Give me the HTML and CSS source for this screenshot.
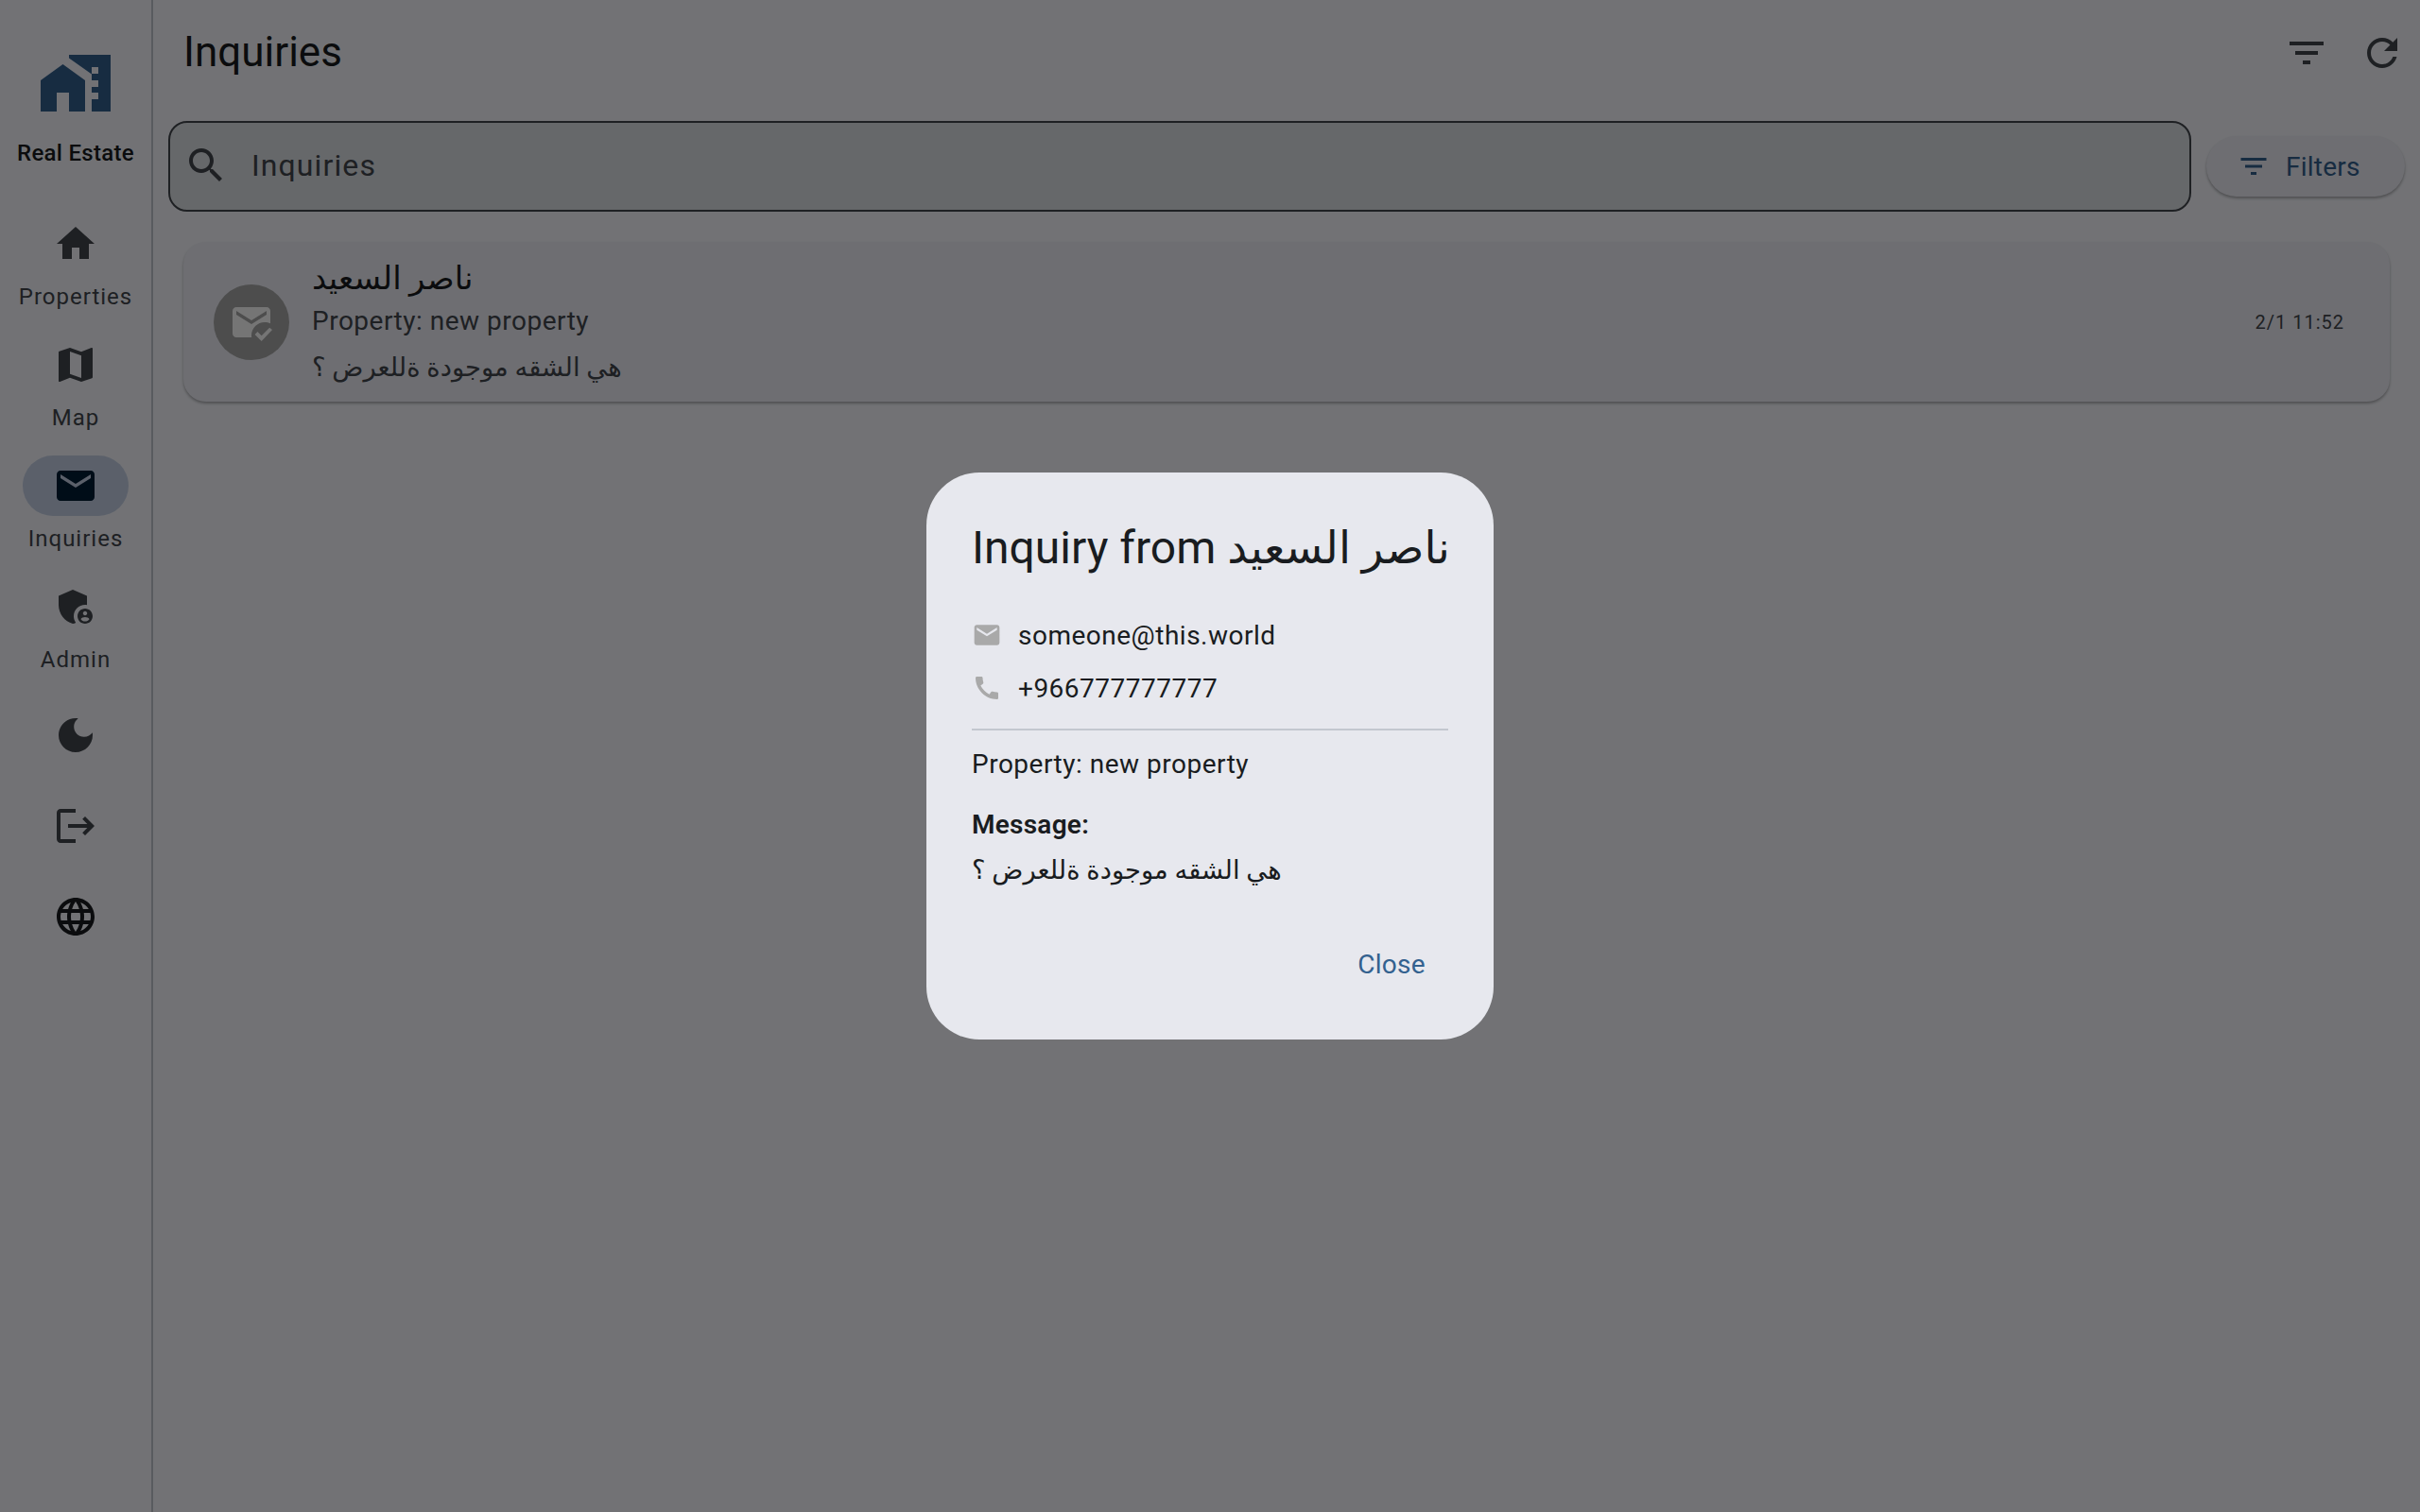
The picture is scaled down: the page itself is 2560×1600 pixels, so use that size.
FILE: index.html
```html
<!DOCTYPE html>
<html lang="en">
<head>
<meta charset="utf-8">
<title>Inquiries</title>
<link rel="stylesheet" href="styles.css">
</head>
<body>
<div class="app">
  <nav class="rail">
    <div class="brand">
      <svg class="logo" viewBox="0 0 74 60"><path class="logo-fill" d="M30 0H74V60H54V47H61V40H54V34H61V27H54V20.5L30 3.5ZM54 13V20H61V13Z" fill-rule="evenodd"/><path class="logo-fill" d="M0 27L23.500 10L47 27V60H30V40H17V60H0Z"/></svg>
      <div class="brand-name">Real Estate</div>
    </div>
    <div class="nav-item">
      <div class="nav-pill"><svg class="icon" viewBox="0 0 24 24"><path d="M10 20v-6h4v6h5v-8h3L12 3 2 12h3v8z"/></svg></div>
      <div class="nav-label">Properties</div>
    </div>
    <div class="nav-item">
      <div class="nav-pill"><svg class="icon" viewBox="0 0 24 24"><path d="M20.5 3l-.16.03L15 5.1 9 3 3.36 4.9c-.21.07-.36.25-.36.48V20.500c0 .28.22.5.5.5l.16-.03L9 18.900l6 2.100 5.640-1.900c.21-.07.36-.25.36-.48V3.500c0-.28-.22-.5-.5-.5zM15 19l-6-2.110V5l6 2.110V19z"/></svg></div>
      <div class="nav-label">Map</div>
    </div>
    <div class="nav-item">
      <div class="nav-pill nav-pill-active"><svg class="icon icon-active" viewBox="0 0 24 24"><path d="M20 4H4c-1.100 0-1.990.9-1.990 2L2 18c0 1.100.9 2 2 2h16c1.100 0 2-.9 2-2V6c0-1.100-.9-2-2-2zm0 4l-8 5-8-5V6l8 5 8-5v2z"/></svg></div>
      <div class="nav-label">Inquiries</div>
    </div>
    <div class="nav-item">
      <div class="nav-pill"><svg class="icon" viewBox="0 0 24 24"><path d="M17 11c.34 0 .67.04 1 .09V6.270L10.500 3 3 6.270v4.910c0 4.540 3.200 8.790 7.500 9.820.55-.13 1.080-.32 1.600-.55-.69-.98-1.100-2.170-1.100-3.450 0-3.310 2.690-6 6-6z"/><path d="M17 13c-2.210 0-4 1.790-4 4s1.790 4 4 4 4-1.790 4-4-1.790-4-4-4zm0 1.380c.62 0 1.120.51 1.120 1.120s-.51 1.120-1.120 1.120-1.120-.51-1.120-1.120.5-1.120 1.120-1.120zm0 5.370c-.93 0-1.740-.46-2.240-1.170.05-.72 1.510-1.080 2.240-1.080s2.190.36 2.240 1.080c-.5.71-1.310 1.170-2.240 1.170z"/></svg></div>
      <div class="nav-label">Admin</div>
    </div>
    <div class="rail-actions">
      <svg class="icon" viewBox="0 0 24 24"><path d="M12 3c-4.970 0-9 4.030-9 9s4.030 9 9 9 9-4.030 9-9c0-.46-.04-.92-.1-1.360-.98 1.370-2.580 2.260-4.400 2.260-2.980 0-5.400-2.420-5.400-5.400 0-1.810.89-3.420 2.260-4.400-.44-.06-.9-.1-1.360-.1z"/></svg>
      <svg class="icon" viewBox="0 0 24 24"><path d="M17 7l-1.410 1.410L18.170 11H8v2h10.170l-2.580 2.580L17 17l5-5zM4 5h8V3H4c-1.100 0-2 .9-2 2v14c0 1.100.9 2 2 2h8v-2H4V5z"/></svg>
      <svg class="icon icon-dark" viewBox="0 0 24 24"><path d="M11.990 2C6.470 2 2 6.480 2 12s4.470 10 9.990 10C17.520 22 22 17.520 22 12S17.520 2 11.990 2zm6.930 6h-2.950c-.32-1.250-.78-2.450-1.380-3.560 1.840.63 3.370 1.910 4.330 3.560zM12 4.040c.83 1.200 1.480 2.530 1.910 3.960h-3.820c.43-1.430 1.080-2.760 1.910-3.960zM4.260 14C4.100 13.360 4 12.690 4 12s.1-1.360.26-2h3.380c-.08.66-.14 1.320-.14 2 0 .68.06 1.340.14 2H4.260zm.82 2h2.950c.32 1.250.78 2.450 1.380 3.560-1.840-.63-3.370-1.900-4.330-3.560zm2.950-8H5.080c.96-1.660 2.490-2.930 4.330-3.560C8.810 5.550 8.350 6.750 8.030 8zM12 19.960c-.83-1.200-1.480-2.530-1.910-3.960h3.820c-.43 1.430-1.080 2.760-1.910 3.960zM14.340 14H9.660c-.09-.66-.16-1.320-.16-2 0-.68.07-1.350.16-2h4.680c.09.65.16 1.320.16 2 0 .68-.07 1.340-.16 2zm.25 5.560c.6-1.110 1.060-2.310 1.380-3.560h2.950c-.96 1.650-2.490 2.930-4.330 3.560zM16.360 14c.08-.66.14-1.320.14-2 0-.68-.06-1.340-.14-2h3.380c.16.64.26 1.310.26 2s-.1 1.360-.26 2h-3.380z"/></svg>
    </div>
  </nav>
  <main class="main">
    <header class="topbar">
      <h1 class="page-title">Inquiries</h1>
      <div class="top-actions">
        <svg class="icon" viewBox="0 0 24 24"><path d="M10 18h4v-2h-4v2zM3 6v2h18V6H3zm3 7h12v-2H6v2z"/></svg>
        <svg class="icon" viewBox="0 0 24 24"><path d="M17.650 6.350C16.200 4.900 14.210 4 12 4c-4.420 0-7.990 3.580-7.990 8s3.570 8 7.990 8c3.730 0 6.840-2.550 7.730-6h-2.080c-.82 2.330-3.040 4-5.650 4-3.310 0-6-2.690-6-6s2.690-6 6-6c1.660 0 3.140.69 4.220 1.780L13 11h7V4l-2.350 2.350z"/></svg>
      </div>
    </header>
    <div class="search-row">
      <div class="search">
        <svg class="icon" viewBox="0 0 24 24"><path d="M15.500 14h-.79l-.28-.27C15.410 12.590 16 11.110 16 9.500 16 5.910 13.090 3 9.500 3S3 5.910 3 9.500 5.910 16 9.500 16c1.610 0 3.090-.59 4.230-1.570l.27.28v.79l5 4.990L20.490 19l-4.990-5zm-6 0C7.010 14 5 11.990 5 9.500S7.010 5 9.500 5 14 7.010 14 9.500 11.990 14 9.500 14z"/></svg>
        <span class="search-text">Inquiries</span>
      </div>
      <div class="filter-btn">
        <svg class="icon-small" viewBox="0 0 24 24"><path d="M10 18h4v-2h-4v2zM3 6v2h18V6H3zm3 7h12v-2H6v2z"/></svg>
        <span>Filters</span>
      </div>
    </div>
    <section class="card">
      <div class="avatar">
        <svg class="avatar-icon" viewBox="0 0 24 24"><path d="M12 19c0-3.870 3.130-7 7-7 1.080 0 2.090.25 3 .68V6c0-1.100-.9-2-2-2H4c-1.100 0-2 .9-2 2v12c0 1.100.9 2 2 2h8.080c-.05-.33-.08-.66-.08-1zM4 6l8 5 8-5v2l-8 5-8-5V6zm13.340 16l-3.540-3.540 1.410-1.410 2.120 2.120 4.240-4.240L23 16l-5.660 6z"/></svg>
      </div>
      <div class="card-body">
        <div class="card-name">ناصر السعيد</div>
        <div class="card-line">Property: new property</div>
        <div class="card-line card-msg">هي الشقه موجودة ةللعرض ؟</div>
      </div>
      <div class="card-date">2/1 11:52</div>
    </section>
  </main>
</div>
<div class="scrim">
  <div class="dialog">
    <h2 class="dialog-title">Inquiry from <span class="title-name">ناصر السعيد</span></h2>
    <div class="contact">
      <svg class="contact-icon" viewBox="0 0 24 24"><path d="M20 4H4c-1.100 0-1.990.9-1.990 2L2 18c0 1.100.9 2 2 2h16c1.100 0 2-.9 2-2V6c0-1.100-.9-2-2-2zm0 4l-8 5-8-5V6l8 5 8-5v2z"/></svg>
      <span>someone@this.world</span>
    </div>
    <div class="contact">
      <svg class="contact-icon" viewBox="0 0 24 24"><path d="M20.010 15.380c-1.230 0-2.420-.2-3.530-.56-.35-.12-.74-.03-1.010.24l-1.570 1.970c-2.830-1.350-5.480-3.900-6.890-6.830l1.950-1.660c.27-.28.35-.67.24-1.020-.37-1.110-.56-2.300-.56-3.530 0-.54-.45-.99-.99-.99H4.190C3.650 3 3 3.240 3 3.990 3 13.280 10.730 21 20.010 21c.71 0 .99-.63.99-1.180v-3.450c0-.54-.45-.99-.99-.99z"/></svg>
      <span>+966777777777</span>
    </div>
    <hr class="divider">
    <div class="dialog-line">Property: new property</div>
    <div class="dialog-label">Message:</div>
    <div class="dialog-line dialog-msg">هي الشقه موجودة ةللعرض ؟</div>
    <div class="dialog-actions"><span class="close">Close</span></div>
  </div>
</div>
</body>
</html>
```
FILE: styles.css
```css
* { box-sizing: border-box; }
html, body { margin: 0; height: 100%; }
body {
  background: #f8f9ff;
  color: #191c20;
  font-family: Roboto, "Noto Sans", "DejaVu Sans", sans-serif;
  overflow: hidden;
}
.app { display: flex; height: 1600px; }

.icon { width: 48px; height: 48px; fill: #43474e; display: block; flex: none; }
.icon-active { fill: #001d36; }
.icon-dark { fill: #191c20; }
.icon-small { width: 36px; height: 36px; fill: #33618f; display: block; flex: none; }

.rail {
  width: 162px;
  flex: none;
  border-right: 2px solid #c3c7cf;
  display: flex;
  flex-direction: column;
  align-items: center;
}
.brand { display: flex; flex-direction: column; align-items: center; padding-top: 58px; height: 194px; }
.logo { width: 74px; height: 60px; display: block; }
.logo-fill { fill: #33618f; }
.brand-name { font-size: 24px; font-weight: 500; letter-spacing: .3px; line-height: 34px; margin-top: 27px; color: #191c20; white-space: nowrap; }

.nav-item { height: 128px; width: 100%; display: flex; flex-direction: column; align-items: center; padding-top: 32px; }
.nav-pill { width: 112px; height: 64px; border-radius: 32px; display: flex; align-items: center; justify-content: center; flex: none; }
.nav-pill-active { background: #c6d2e8; }
.nav-label { font-size: 24px; letter-spacing: 1px; line-height: 32px; margin-top: 8px; color: #43474e; white-space: nowrap; }

.rail-actions { display: flex; flex-direction: column; align-items: center; gap: 48px; margin-top: 48px; }

.main { flex: 1; min-width: 0; display: flex; flex-direction: column; }
.topbar { height: 110px; margin-bottom: 2px; display: flex; align-items: center; justify-content: space-between; padding: 0 16px 0 32px; flex: none; }
.top-actions { display: flex; gap: 32px; margin-top: 2px; }
.page-title { margin: 0; font-size: 44px; font-weight: 400; line-height: 56px; color: #191c20; }

.search-row { display: flex; align-items: center; padding: 16px 16px 0; gap: 16px; }
.search {
  flex: 1;
  height: 96px;
  border: 2px solid #43474e;
  border-radius: 20px;
  background: #dee2e6;
  display: flex;
  align-items: center;
  padding: 0 0 2px 14px;
  gap: 24px;
}
.search-text { font-size: 32px; letter-spacing: 1.1px; color: #43474e; }
.filter-btn {
  width: 210px;
  height: 64px;
  border-radius: 32px;
  background: #eff0f8;
  box-shadow: 0 2px 3px rgba(0,0,0,.3);
  display: flex;
  align-items: center;
  padding-left: 32px;
  gap: 16px;
  font-size: 28px;
  font-weight: 400;
  letter-spacing: .25px;
  color: #33618f;
}

.card {
  margin: 32px 32px 0 32px;
  height: 169px;
  border-radius: 24px;
  background: #eff0f8;
  box-shadow: 0 2px 3px rgba(0,0,0,.3);
  display: flex;
  align-items: center;
  padding: 0 48px 0 32px;
}
.avatar { width: 80px; height: 80px; border-radius: 50%; background: #a8a8a8; display: flex; align-items: center; justify-content: center; flex: none; }
.avatar-icon { width: 48px; height: 48px; fill: #fff; display: block; }
.card-body { flex: 1; min-width: 0; margin-left: 24px; padding-top: 2px; }
.card-name { font-size: 34px; line-height: 40px; color: #191c20; }
.card-line { font-size: 28px; letter-spacing: .5px; line-height: 40px; color: #43474e; margin-top: 6px; }
.card-msg { margin-top: 9px; font-size: 27.4px; letter-spacing: 0; }
.card-date { font-size: 20px; letter-spacing: 1px; color: #43474e; }

.scrim {
  position: fixed;
  inset: 0;
  background: rgba(0,0,0,.54);
  display: flex;
  align-items: center;
  justify-content: center;
}
.dialog {
  width: 600px;
  height: 600px;
  border-radius: 56px;
  background: #e7e8ee;
  padding: 48px;
  display: flex;
  flex-direction: column;
}
.dialog-title { margin: 0 0 32px; font-size: 48px; font-weight: 400; line-height: 64px; color: #191c20; white-space: nowrap; }
.title-name { font-size: 47px; }
.contact { display: flex; align-items: center; gap: 17px; height: 56px; font-size: 28px; letter-spacing: .5px; color: #191c20; }
.contact-icon { width: 32px; height: 32px; fill: #a9a9a9; display: block; flex: none; }
.divider { width: 100%; height: 2px; border: 0; background: #c3c7cf; margin: 15px 0 0; flex: none; }
.dialog-line { font-size: 28px; letter-spacing: .5px; line-height: 40px; margin-top: 16px; color: #191c20; }
.dialog-label { font-size: 28px; font-weight: 600; letter-spacing: .25px; line-height: 40px; margin-top: 24px; color: #191c20; }
.dialog-msg { margin-top: 8px; font-size: 27.4px; letter-spacing: 0; }
.dialog-actions { margin-top: auto; display: flex; justify-content: flex-end; padding: 0 24px 11px 0; }
.close { font-size: 28px; font-weight: 400; letter-spacing: .3px; color: #33618f; line-height: 40px; }
```
